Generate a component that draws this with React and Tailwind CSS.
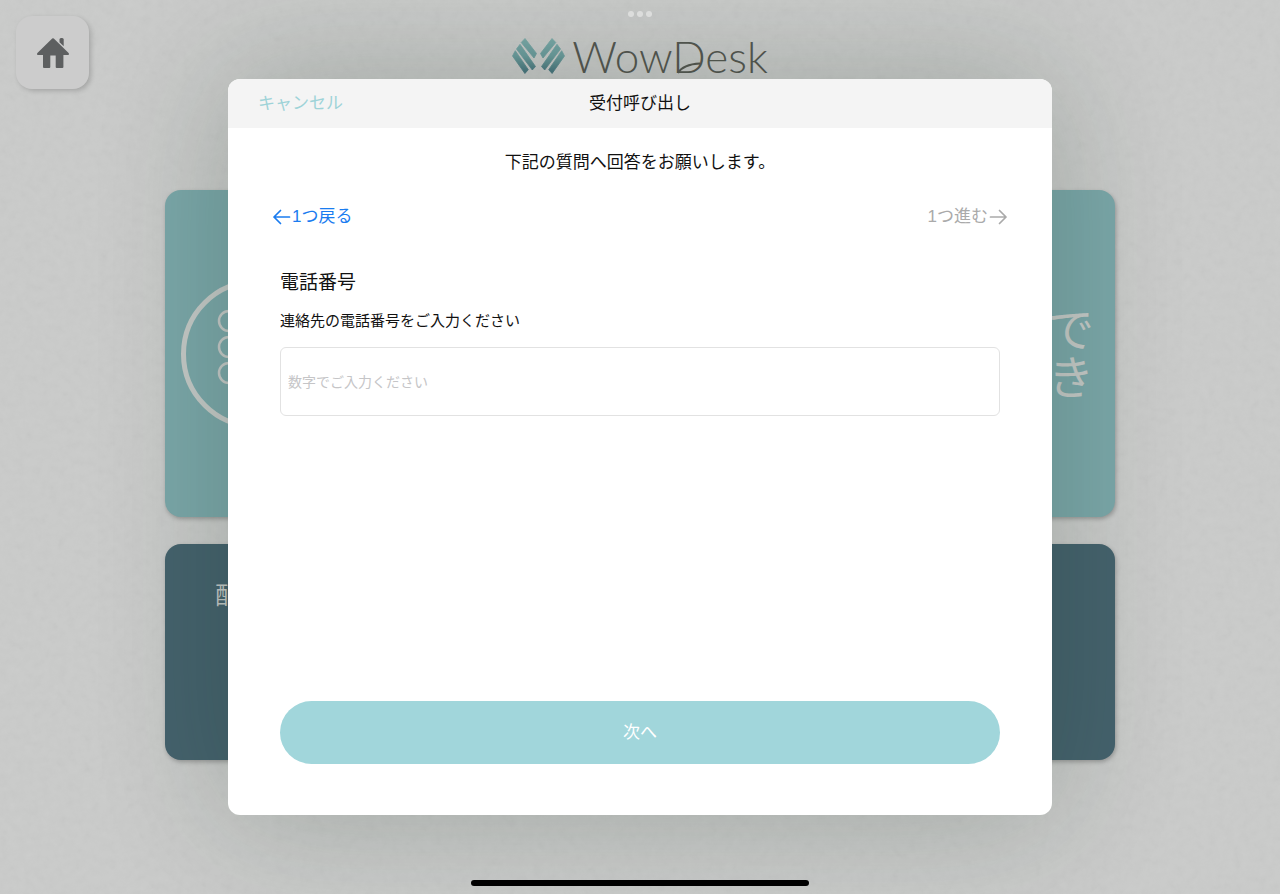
function PaperTexture() {
  return (
    <svg className="absolute inset-0 h-full w-full opacity-[0.08]" aria-hidden="true">
      <filter id="paper">
        <feTurbulence type="fractalNoise" baseFrequency="0.12" numOctaves="3" seed="4" />
        <feColorMatrix type="saturate" values="0" />
      </filter>
      <rect width="100%" height="100%" filter="url(#paper)" />
    </svg>
  )
}

function HomeIcon() {
  return (
    <svg viewBox="0 0 32 30" className="h-[30px] w-8 fill-[#5d5f60]" aria-hidden="true">
      <path d="M15.2 .5a1.2 1.2 0 0 1 1.6 0L31.6 15c.7 .8 .3 1.9-.7 1.9H26.4V29a1 1 0 0 1-1 1H19.7a1 1 0 0 1-1-1V17.6H13.3V29a1 1 0 0 1-1 1H7a1 1 0 0 1-1-1V16.9H1.1c-1 0-1.4-1.1-.7-1.9Z" />
      <path d="M22.5 1.5a1.5 1.5 0 0 1 1.5-1.5h1.2a1.5 1.5 0 0 1 1.5 1.5V8.3L22.5 4.2Z" />
    </svg>
  )
}

function Arrow({ className = '' }) {
  return (
    <svg
      viewBox="0 0 20 16"
      className={`h-4 w-5 fill-none stroke-current ${className}`}
      strokeWidth="1.7"
      strokeLinecap="round"
      strokeLinejoin="round"
      aria-hidden="true"
    >
      <path d="M8.5 1.5L2 8L8.5 14.5M2 8H17.5" />
    </svg>
  )
}

function LogoMark() {
  return (
    <svg viewBox="0 0 54 36" className="h-9 w-[54px]" aria-hidden="true">
      <defs>
        <linearGradient id="mark" x1="0" y1="0" x2="0" y2="36" gradientUnits="userSpaceOnUse">
          <stop offset="0" stopColor="#7aa9a8" />
          <stop offset="0.5" stopColor="#6c9c9d" />
          <stop offset="1" stopColor="#44707a" />
        </linearGradient>
        <g id="stripes" strokeWidth="0.8" strokeLinejoin="round">
          <path d="M13 0.5L24.5 15.5L22 20L9.2 4.5Z" />
          <path d="M8 6.3L23.5 28.5L20.3 32L4.5 11Z" />
          <path d="M3.3 12.7L16.3 31.7L12.9 35.5L0.5 18Z" />
        </g>
      </defs>
      <g fill="url(#mark)" stroke="url(#mark)">
        <use href="#stripes" />
        <use href="#stripes" transform="translate(53 0) scale(-1 1)" />
      </g>
    </svg>
  )
}

function Logo() {
  return (
    <div className="flex h-10 items-center gap-1.5">
      <LogoMark />
      <div className="relative pt-1">
        <span className="font-['Lato',sans-serif] text-[44px] leading-10 font-light text-[#555751]">WowDesk</span>
        {/* swoosh inside the D */}
        <svg
          viewBox="0 0 24 12"
          className="absolute right-[67px] bottom-1.5 h-3 w-6 fill-none stroke-[#555751]"
          strokeWidth="2"
          aria-hidden="true"
        >
          <path d="M1 11C5 4 13 2 23 1.5" />
        </svg>
      </div>
    </div>
  )
}

function KeypadIcon() {
  return (
    <svg viewBox="0 0 150 150" className="h-[150px] w-[150px] shrink-0 fill-none stroke-[#c5c9c7]" aria-hidden="true">
      <circle cx="75" cy="75" r="72.5" strokeWidth="5" />
      {[42, 68, 94].map((cy) =>
        [48, 75, 102].map((cx) => <circle key={`${cx}-${cy}`} cx={cx} cy={cy} r="10" strokeWidth="2.5" />)
      )}
    </svg>
  )
}

function ReceptionScreen() {
  return (
    <div className="relative flex min-h-screen flex-col items-center bg-[#cacbca]">
      <PaperTexture />
      <header className="relative grid w-full grid-cols-[1fr_auto_1fr] items-start px-4 pt-4">
        <button
          type="button"
          aria-label="ホーム"
          className="flex h-[73px] w-[73px] items-center justify-center rounded-2xl bg-[#cccccc] shadow-[2px_2px_5px_rgba(0,0,0,0.18)]"
        >
          <HomeIcon />
        </button>
        <div className="pt-5">
          <Logo />
        </div>
      </header>
      <main className="relative flex w-full max-w-[950px] flex-col gap-[27px] pt-[101px]">
        <button
          type="button"
          className="flex h-[327px] items-center justify-between rounded-2xl bg-[#7ba7a9] pr-5 pl-4 text-[#c5c9c7] shadow-[1px_2px_4px_rgba(0,0,0,0.25)]"
        >
          <KeypadIcon />
          <span className="w-12 text-[46px] leading-12">でき</span>
        </button>
        <button
          type="button"
          className="flex h-[216px] items-start rounded-2xl bg-[#45626d] px-[50px] pt-9 text-2xl text-[#c5c9c7] shadow-[1px_2px_4px_rgba(0,0,0,0.25)]"
        >
          配
        </button>
      </main>
    </div>
  )
}

function CallDialog() {
  return (
    <form
      role="dialog"
      aria-labelledby="dialog-title"
      className="flex min-h-[736px] w-full max-w-[824px] flex-col overflow-hidden rounded-xl bg-white shadow-[0_0_130px_rgba(20,45,30,0.24)]"
    >
      <header className="grid h-[49px] grid-cols-[1fr_auto_1fr] items-center bg-[#f4f4f4] px-[30px]">
        <button type="button" className="justify-self-start text-[#9ed3d8]">キャンセル</button>
        <h1 id="dialog-title">受付呼び出し</h1>
      </header>

      <p className="pt-[23px] text-center">下記の質問へ回答をお願いします。</p>

      <nav className="flex justify-between px-11 pt-[30px]">
        <button type="button" className="flex items-center text-[#1a7cf0]">
          <Arrow />
          1つ戻る
        </button>
        <button type="button" disabled className="flex items-center text-[#aaaaaa]">
          1つ進む
          <Arrow className="rotate-180" />
        </button>
      </nav>

      <div className="flex grow flex-col px-13 pt-10 pb-[51px]">
        <h2 className="text-[19px] leading-7">電話番号</h2>
        <label htmlFor="phone" className="pt-3 text-[15px] leading-6">連絡先の電話番号をご入力ください</label>
        <input
          id="phone"
          type="tel"
          placeholder="数字でご入力ください"
          className="mt-[14px] h-[69px] w-full rounded-md border border-[#e2e2e2] px-[7px] text-sm placeholder:text-[#c5c5c7]"
        />
        <button type="submit" className="mt-auto h-[63px] rounded-full bg-[#a1d6db] text-white">次へ</button>
      </div>
    </form>
  )
}

export default function App() {
  return (
    <div className="relative min-h-screen overflow-hidden font-['Liberation_Sans','Noto_Sans_CJK_JP',sans-serif] text-[17px] leading-6 text-[#111111]">
      <ReceptionScreen />
      <div className="absolute inset-0 flex items-center justify-center">
        <CallDialog />
      </div>
      <div className="absolute inset-x-0 top-[11px] flex justify-center gap-[3px]">
        <span className="h-[6px] w-[6px] rounded-full bg-[#dcdddc]" />
        <span className="h-[6px] w-[6px] rounded-full bg-[#dcdddc]" />
        <span className="h-[6px] w-[6px] rounded-full bg-[#dcdddc]" />
      </div>
      <div className="absolute inset-x-0 bottom-2 flex justify-center">
        <span className="h-[6px] w-[338px] rounded-full bg-black" />
      </div>
    </div>
  )
}
